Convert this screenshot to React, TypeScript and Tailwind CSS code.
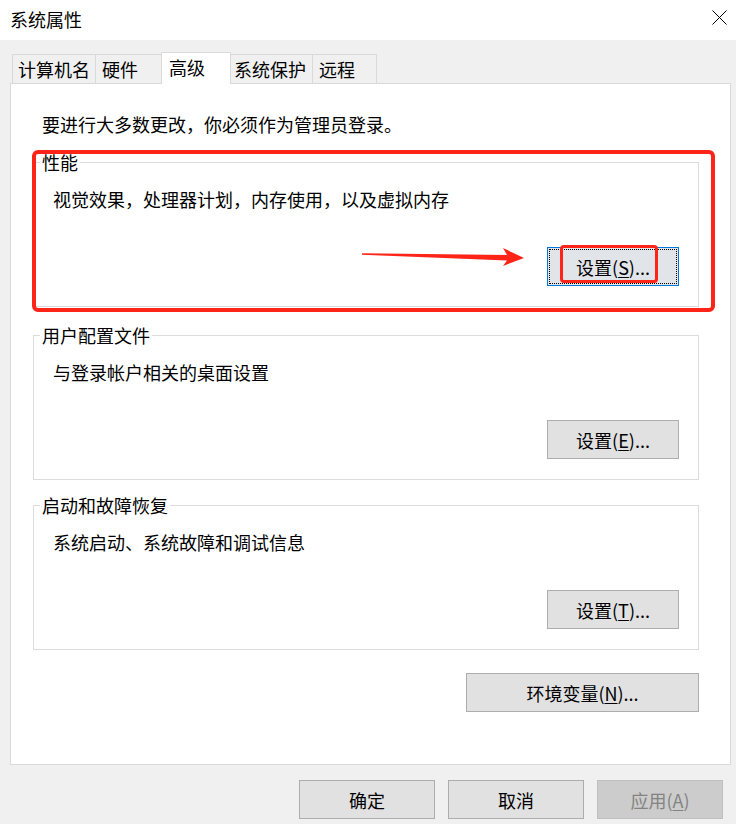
import React from "react";

const font = "font-['Noto_Sans_CJK_SC','Microsoft_YaHei',sans-serif]";

function Btn({
  children,
  className = "",
  focused = false,
  disabled = false,
  annotate = false,
}: {
  children: React.ReactNode;
  className?: string;
  focused?: boolean;
  disabled?: boolean;
  annotate?: boolean;
}) {
  const tone = disabled
    ? "border-[#bfbfbf] bg-[#cccccc] text-[#838383]"
    : focused
    ? "border-[#0078d7] bg-[#e1e5ea] text-black"
    : "border-[#adadad] bg-[#e1e1e1] text-black";
  return (
    <div
      className={`relative flex h-[39px] shrink-0 items-center justify-center border text-[18px] leading-[24px] ${tone} ${className}`}
    >
      {focused && (
        <span className="pointer-events-none absolute inset-[1px] border border-dotted border-black" />
      )}
      <span className="relative">{children}</span>
      {annotate && (
        <span className="pointer-events-none absolute left-[12px] top-[-3px] h-[38px] w-[98px] rounded-[4px] border-[3px] border-[#fe2418]" />
      )}
    </div>
  );
}

function Group({
  title,
  desc,
  children,
  overlay,
}: {
  title: string;
  desc: string;
  children: React.ReactNode;
  overlay?: React.ReactNode;
}) {
  return (
    <div className="relative ml-[22px] flex h-[145px] w-[666px] flex-col border border-[#dcdcdc]">
      <span className="absolute left-[6px] top-[-13px] bg-white px-[2px] leading-[24px]">
        {title}
      </span>
      <p className="mt-[24px] pl-[19px] leading-[24px]">{desc}</p>
      <div className="mt-[36px] flex justify-end pr-[19px]">{children}</div>
      {overlay}
    </div>
  );
}

const tabs = [
  { label: "计算机名", w: "w-[84px]", pl: "pl-[5px]" },
  { label: "硬件", w: "w-[67px]", pl: "pl-[6px]" },
  { label: "高级", w: "w-[70px]", pl: "pl-[7px]", active: true },
  { label: "系统保护", w: "w-[83px]", pl: "pl-[3px]" },
  { label: "远程", w: "w-[65px]", pl: "pl-[6px]" },
];

export default function App() {
  return (
    <div className={`h-[824px] w-[736px] overflow-hidden bg-[#f0f0f0] text-[18px] text-black ${font}`}>
      {/* title bar */}
      <div className="flex h-[40px] items-center justify-between bg-white pl-[10px] pr-[9px]">
        <span className="mb-[2px] leading-[24px]">系统属性</span>
        <svg width="15" height="15" viewBox="0 0 15 15" className="mb-[5px]">
          <path d="M0.5 0.5 L14.5 14.5 M14.5 0.5 L0.5 14.5" stroke="#000" strokeWidth="1" />
        </svg>
      </div>

      {/* tabs */}
      <div className="flex h-[43px] items-end pl-[12px]">
        {tabs.map((t) =>
          t.active ? (
            <div
              key={t.label}
              className={`relative z-10 -mb-px -ml-px flex h-[32px] items-start border border-b-0 border-[#d9d9d9] bg-white pt-[2px] ${t.w} ${t.pl} leading-[24px]`}
            >
              {t.label}
            </div>
          ) : (
            <div
              key={t.label}
              className={`-ml-px flex h-[29px] items-center border border-b-0 border-[#d9d9d9] first:ml-0 ${t.w} ${t.pl} leading-[24px]`}
            >
              {t.label}
            </div>
          )
        )}
      </div>

      {/* panel */}
      <div className="ml-[10px] flex h-[682px] w-[721px] flex-col border border-[#d9d9d9] bg-white">
        <p className="ml-[31px] mt-[28px] leading-[24px]">
          要进行大多数更改，你必须作为管理员登录。
        </p>

        <div className="mt-[26px]">
          <Group
            title="性能"
            desc="视觉效果，处理器计划，内存使用，以及虚拟内存"
            overlay={
              <>
                <span className="pointer-events-none absolute left-[-2px] top-[-13px] h-[162px] w-[683px] rounded-[6px] border-[4px] border-[#fe2418]" />
                <svg
                  className="pointer-events-none absolute left-[328px] top-[84px]"
                  width="166"
                  height="22"
                  viewBox="0 0 166 22"
                >
                  <polygon
                    points="0,6.3 145,8 141,1 162,11 141,19 145,13.6 0,7.8"
                    fill="#fe2418"
                  />
                </svg>
              </>
            }
          >
            <Btn className="w-[132px]" focused annotate>
              设置(<u className="underline-offset-2">S</u>)...
            </Btn>
          </Group>
        </div>

        <div className="mt-[28px]">
          <Group title="用户配置文件" desc="与登录帐户相关的桌面设置">
            <Btn className="w-[132px]">
              设置(<u className="underline-offset-2">E</u>)...
            </Btn>
          </Group>
        </div>

        <div className="mt-[25px]">
          <Group title="启动和故障恢复" desc="系统启动、系统故障和调试信息">
            <Btn className="w-[132px]">
              设置(<u className="underline-offset-2">T</u>)...
            </Btn>
          </Group>
        </div>

        <div className="mt-[23px] flex justify-end pr-[31px]">
          <Btn className="w-[233px]">
            环境变量(<u className="underline-offset-2">N</u>)...
          </Btn>
        </div>
      </div>

      {/* dialog buttons */}
      <div className="mt-[15px] flex justify-end gap-[13px] pr-[13px]">
        <Btn className="w-[136px]">确定</Btn>
        <Btn className="w-[136px]">取消</Btn>
        <Btn className="w-[126px]" disabled>
          应用(<u className="underline-offset-2">A</u>)
        </Btn>
      </div>
    </div>
  );
}
